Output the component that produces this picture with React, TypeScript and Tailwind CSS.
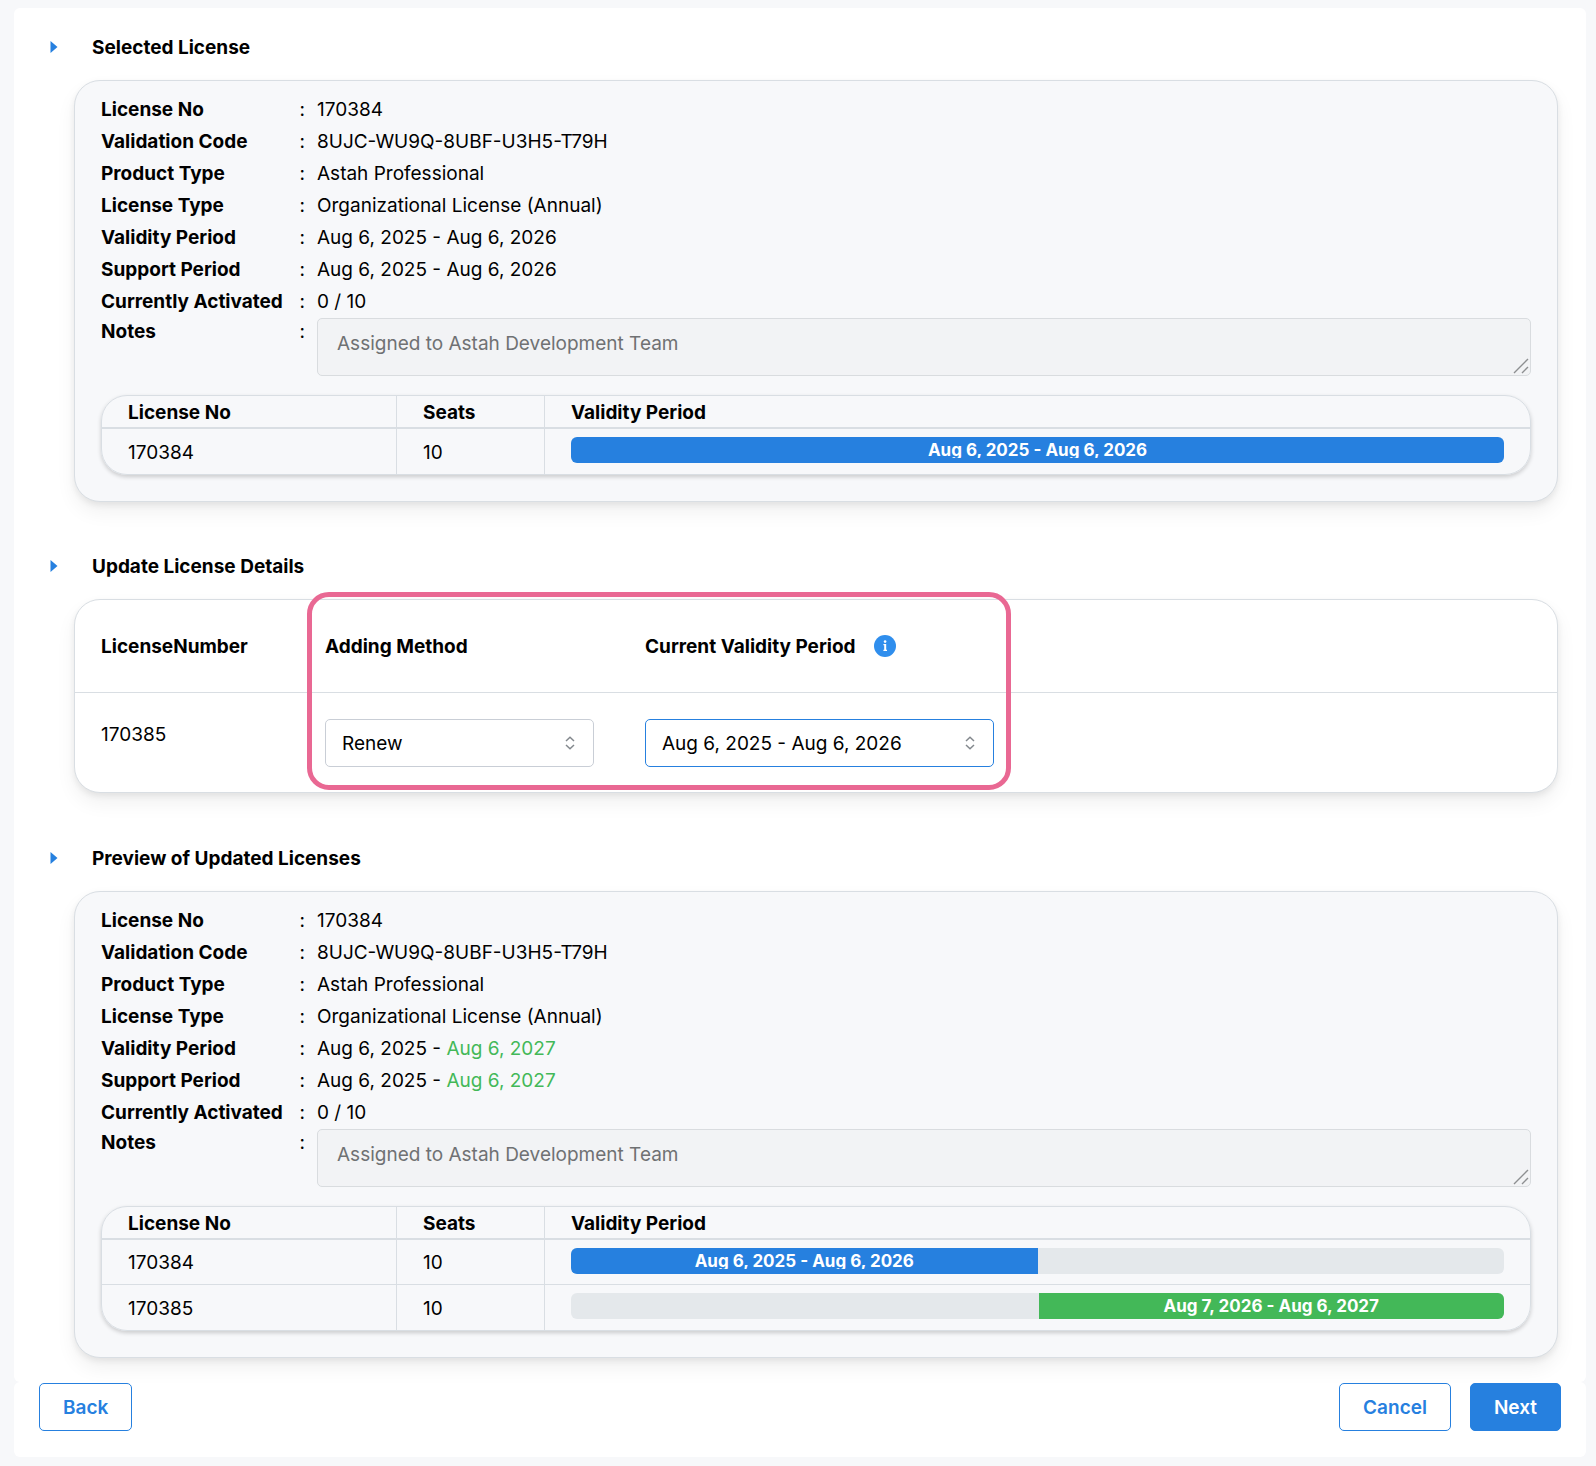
import { useState } from 'react';
import type { ReactNode } from 'react';

interface LicenseRow {
  no: string;
  seats: number;
  from: string;
  to: string;
  slot: 'full' | 'first' | 'second';
}

interface Detail {
  label: string;
  value: ReactNode;
}

const SLOT_CLASSES = {
  full: 'w-full bg-[#2680df]',
  first: 'w-1/2 bg-[#2680df]',
  second: 'ml-auto w-[calc(50%-1px)] bg-[#43b858]',
};

const selectedRows: LicenseRow[] = [
  { no: '170384', seats: 10, from: 'Aug 6, 2025', to: 'Aug 6, 2026', slot: 'full' },
];

const previewRows: LicenseRow[] = [
  { no: '170384', seats: 10, from: 'Aug 6, 2025', to: 'Aug 6, 2026', slot: 'first' },
  { no: '170385', seats: 10, from: 'Aug 7, 2026', to: 'Aug 6, 2027', slot: 'second' },
];

function getDetails(period: ReactNode): Detail[] {
  return [
    { label: 'License No', value: '170384' },
    { label: 'Validation Code', value: '8UJC-WU9Q-8UBF-U3H5-T79H' },
    { label: 'Product Type', value: 'Astah Professional' },
    { label: 'License Type', value: 'Organizational License (Annual)' },
    { label: 'Validity Period', value: period },
    { label: 'Support Period', value: period },
    { label: 'Currently Activated', value: '0 / 10' },
  ];
}

function Section({ title, children }: { title: string; children: ReactNode }) {
  return (
    <section>
      <div className="flex h-8 items-center">
        <svg viewBox="0 0 8 12" className="h-3 w-2 fill-[#2680df]" aria-hidden="true">
          <path d="M0.5 0 L7.5 6 L0.5 12 Z" />
        </svg>
        <h2 className="ml-[34px] pt-0.5 font-bold">{title}</h2>
      </div>
      <div className="mt-[17px] ml-6">{children}</div>
    </section>
  );
}

function LicenseTable({ rows }: { rows: LicenseRow[] }) {
  return (
    <div className="mt-[19px] overflow-hidden rounded-[26px] border border-[#d9dee3] shadow-[0_2px_4px_rgba(0,0,0,0.18)]">
      <table className="w-full table-fixed border-separate border-spacing-0 text-left">
        <thead>
          <tr className="h-[33px]">
            <th className="w-[295px] border-r border-b-2 border-[#d9dee3] p-0 pt-0.5 pl-[26px] font-bold">License No</th>
            <th className="w-[148px] border-r border-b-2 border-[#d9dee3] p-0 pt-0.5 pl-[26px] font-bold">Seats</th>
            <th className="border-b-2 border-[#d9dee3] p-0 pt-0.5 pl-[26px] font-bold">Validity Period</th>
          </tr>
        </thead>
        <tbody className="[&>tr:not(:last-child)>td]:border-b">
          {rows.map((row) => (
            <tr key={row.no} className="h-[45px]">
              <td className="border-r border-[#d9dee3] p-0 pt-0.5 pl-[26px]">{row.no}</td>
              <td className="border-r border-[#d9dee3] p-0 pt-0.5 pl-[26px]">{row.seats}</td>
              <td className="border-[#d9dee3] p-0 px-[26px] align-top">
                <div className="mt-2 overflow-hidden rounded-md bg-[#e4e8eb]">
                  <div className={`py-[5px] text-center text-[17px] leading-4 font-bold text-white ${SLOT_CLASSES[row.slot]}`}>
                    <div className={row.slot === 'second' ? '' : 'overflow-hidden'}>
                      {row.from} - {row.to}
                    </div>
                  </div>
                </div>
              </td>
            </tr>
          ))}
        </tbody>
      </table>
    </div>
  );
}

function LicenseCard({ id, details, rows }: { id: string; details: Detail[]; rows: LicenseRow[] }) {
  return (
    <div className="rounded-[26px] border border-[#d9dee3] bg-[#f7f8fa] px-[26px] pt-[13px] pb-[26px] shadow-[0_10px_20px_rgba(0,0,0,0.06),0_3px_6px_rgba(0,0,0,0.07)]">
      <dl>
        {details.map((detail) => (
          <div key={detail.label} className="flex h-8 items-center">
            <dt className="flex w-[216px] justify-between pr-3 font-bold">
              {detail.label}
              <span className="font-normal">:</span>
            </dt>
            <dd>{detail.value}</dd>
          </div>
        ))}
      </dl>
      <div className="flex items-start">
        <label htmlFor={id} className="flex w-[216px] justify-between pr-3 leading-7 font-bold">
          Notes
          <span className="font-normal">:</span>
        </label>
        <div className="relative flex flex-1">
          <textarea
            id={id}
            rows={1}
            readOnly
            className="h-[58px] w-full resize-none rounded-[5px] border border-[#d9dcdf] bg-[#f2f3f5] px-[19px] py-3 leading-[26px] text-[#6f7173]"
            defaultValue="Assigned to Astah Development Team"
          />
          <svg viewBox="0 0 16 16" className="absolute right-[2px] bottom-[2px] size-4" fill="none" stroke="#8d8f91" strokeWidth="1.4" aria-hidden="true">
            <path d="M1 15 L15 1 M9 15 L15 9" />
          </svg>
        </div>
      </div>
      <LicenseTable rows={rows} />
    </div>
  );
}

interface PickerProps {
  label: string;
  value: string;
  options: string[];
  className: string;
  onChange: (value: string) => void;
}

function Picker({ label, value, options, className, onChange }: PickerProps) {
  return (
    <div className="relative">
      <select
        aria-label={label}
        value={value}
        onChange={(e) => onChange(e.target.value)}
        className={`h-12 w-full appearance-none rounded-[5px] border bg-white px-4 pt-0.5 ${className}`}
      >
        {options.map((option) => (
          <option key={option}>{option}</option>
        ))}
      </select>
      <svg viewBox="0 0 10 14" className="pointer-events-none absolute top-[17px] right-[19px] h-[14px] w-[10px]" fill="none" stroke="#83888d" strokeWidth="1.5" aria-hidden="true">
        <path d="M1 5 L5 1.2 L9 5 M1 9 L5 12.8 L9 9" />
      </svg>
    </div>
  );
}

function InfoIcon() {
  return (
    <svg viewBox="0 0 22 22" className="size-[22px]" role="img" aria-label="Info">
      <circle cx="11" cy="11" r="11" fill="#2f8eed" />
      <path d="M9.4 9 H12.2 V14.8 H13 V16 H9.4 V14.8 H10.2 V10.2 H9.4 Z" fill="white" />
      <circle cx="11.1" cy="6.6" r="1.3" fill="white" />
    </svg>
  );
}

export default function App() {
  const [method, setMethod] = useState('Renew');
  const [period, setPeriod] = useState('Aug 6, 2025 - Aug 6, 2026');

  return (
    <div className="min-h-screen bg-[#f7f8fa] pt-2 pr-[10px] pb-[9px] pl-[14px] font-[Inter,sans-serif] text-[19px] leading-7 text-black">
      <main className="flex flex-col gap-12 rounded-md bg-white pt-[23px] pr-7 pb-6 pl-9">
        <Section title="Selected License">
          <LicenseCard id="selected-notes" details={getDetails('Aug 6, 2025 - Aug 6, 2026')} rows={selectedRows} />
        </Section>

        <Section title="Update License Details">
          <div className="relative mb-px rounded-[26px] border border-[#d9dee3] bg-white shadow-[0_10px_20px_rgba(0,0,0,0.06),0_3px_6px_rgba(0,0,0,0.07)]">
            <table className="w-full table-fixed border-separate border-spacing-0 text-left">
              <thead>
                <tr className="h-[93px]">
                  <th className="w-[250px] border-b border-[#d9dee3] p-0 pt-0.5 pl-[26px] font-bold">LicenseNumber</th>
                  <th className="w-[320px] border-b border-[#d9dee3] p-0 pt-0.5 font-bold">Adding Method</th>
                  <th className="w-[349px] border-b border-[#d9dee3] p-0 font-bold">
                    <span className="flex items-center gap-[18px]">
                      <span className="pt-0.5">Current Validity Period</span>
                      <InfoIcon />
                    </span>
                  </th>
                  <th className="border-b border-[#d9dee3] p-0" />
                </tr>
              </thead>
              <tbody>
                <tr className="h-[99px]">
                  <td className="p-0 pt-7 pl-[26px] align-top">170385</td>
                  <td className="p-0 pr-[51px]">
                    <Picker label="Adding Method" value={method} options={['Renew', 'Add Seats']} className="border-[#c9ced6]" onChange={setMethod} />
                  </td>
                  <td className="p-0">
                    <Picker label="Current Validity Period" value={period} options={['Aug 6, 2025 - Aug 6, 2026']} className="border-[#2680df]" onChange={setPeriod} />
                  </td>
                  <td className="p-0" />
                </tr>
              </tbody>
            </table>
            <div className="pointer-events-none absolute -top-2 left-[232px] h-[198px] w-[704px] rounded-[22px] border-[5px] border-[#e96893]" />
          </div>
        </Section>

        <Section title="Preview of Updated Licenses">
          <LicenseCard
            id="preview-notes"
            details={getDetails(<>Aug 6, 2025 - <span className="text-[#43b858]">Aug 6, 2027</span></>)}
            rows={previewRows}
          />
        </Section>
      </main>

      <footer className="flex items-center gap-[19px] rounded-md bg-white pt-px pr-[25px] pb-[26px] pl-[25px] font-semibold">
        <button type="button" className="mr-auto h-12 rounded-[5px] border border-[#2680df] bg-white px-[23px] pt-0.5 text-[#2680df]">Back</button>
        <button type="button" className="h-12 rounded-[5px] border border-[#2680df] bg-white px-[23px] pt-0.5 text-[#2680df]">Cancel</button>
        <button type="button" className="h-12 rounded-[5px] border border-[#2680df] bg-[#2680df] px-[23px] pt-0.5 text-white">Next</button>
      </footer>
    </div>
  );
}
